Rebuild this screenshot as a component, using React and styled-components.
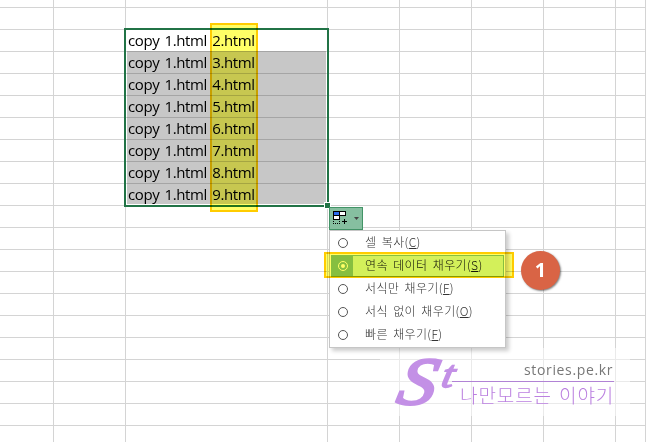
import React from "react";
import styled, { createGlobalStyle } from "styled-components";

const GlobalStyle = createGlobalStyle`
  *, *::before, *::after { box-sizing: border-box; }
  body {
    margin: 0;
    background: #fff;
    overflow: hidden;
    font-family: "Open Sans", "Noto Sans CJK KR", sans-serif;
  }
`;

const Screen = styled.main`
  position: relative;
  width: 646px;
  height: 442px;
  overflow: hidden;
`;

const Sheet = styled.div`
  display: grid;
  grid-template-columns: 54px 72px 202px repeat(4, 72px) 30px;
  grid-template-rows: 8px repeat(20, 22px);
`;

const Cell = styled.div`
  border-right: 1px solid #d4d4d4;
  border-bottom: 1px solid #d4d4d4;
  padding-left: 2px;
  font-size: 15px;
  line-height: 21px;
  letter-spacing: -0.4px;
  word-spacing: 1.8px;
  white-space: pre;
  color: #000;
`;

const Selection = styled.div`
  position: absolute;
  left: 124px;
  top: 28px;
  width: 205px;
  height: 179px;
  border: 2px solid #217346;
  padding: 21px 1px 1px;
`;

const SelectionShade = styled.div`
  height: 153px;
  background: rgba(0, 0, 0, 0.22);
`;

const FillHandle = styled.div`
  position: absolute;
  right: -4px;
  bottom: -4px;
  width: 7px;
  height: 7px;
  border: 1px solid #fff;
  background: #217346;
`;

const Marker = styled.div`
  position: absolute;
  left: ${(p) => p.$x}px;
  top: ${(p) => p.$y}px;
  width: ${(p) => p.$w}px;
  height: ${(p) => p.$h}px;
  background: #ffff66;
  border: 2px solid #ffcc00;
  mix-blend-mode: multiply;
`;

const AutoFill = styled.div`
  position: absolute;
  left: 329px;
  top: 207px;
  display: flex;
  flex-direction: column;
  align-items: flex-start;
`;

const OptionsButton = styled.button`
  width: 34px;
  height: 23px;
  padding: 0;
  display: flex;
  border: 1px solid #439467;
  background: #86bfa0;
`;

const Menu = styled.ul`
  display: flex;
  flex-direction: column;
  gap: 1px;
  width: 177px;
  height: 118px;
  margin: 0;
  padding: 1px;
  list-style: none;
  background: #fff;
  border: 1px solid #c6c6c6;
  box-shadow: 3px 3px 4px rgba(0, 0, 0, 0.2);
`;

const MenuItem = styled.li`
  display: flex;
  align-items: center;
  flex: none;
  height: 22px;
  border: 1px solid ${(p) => (p.$active ? "#86bfa0" : "transparent")};
  background: ${(p) => (p.$active ? "#d3f0e0" : "transparent")};
  color: ${(p) => (p.$active ? "#111" : "#333")};
  font: 300 12px/18px "Noto Sans CJK KR", sans-serif;
`;

const RadioCell = styled.span`
  display: flex;
  align-items: center;
  justify-content: center;
  width: 21px;
  height: 20px;
  background: ${(p) => (p.$active ? "#86bfa0" : "transparent")};
`;

const Radio = styled.span`
  display: flex;
  align-items: center;
  justify-content: center;
  width: 10px;
  height: 10px;
  margin-left: 1px;
  border: 1.4px solid ${(p) => (p.$active ? "#fff" : "#555")};
  border-radius: 50%;

  &::after {
    content: "";
    width: 4px;
    height: 4px;
    border-radius: 50%;
    background: ${(p) => (p.$active ? "#fff" : "transparent")};
  }
`;

const ItemLabel = styled.span`
  margin: -2px 0 0 12px;
  letter-spacing: 0.35px;
  word-spacing: 2.4px;
  white-space: nowrap;
`;

const Badge = styled.div`
  position: absolute;
  left: 521px;
  top: 251px;
  width: 39px;
  height: 39px;
  display: flex;
  align-items: center;
  justify-content: center;
  border-radius: 50%;
  background: #d96445;
  box-shadow: 1px 1px 2px rgba(0, 0, 0, 0.5);
  color: #fff;
  font: bold 20px/36px "Open Sans", sans-serif;
  padding-bottom: 2px;
`;

const Watermark = styled.div`
  position: absolute;
  left: 380px;
  top: 348px;
  width: 250px;
  height: 68px;
  display: flex;
  background: rgba(255, 255, 255, 0.5);
`;

const Monogram = styled.svg`
  flex: none;
  width: 72px;
  height: 68px;
  overflow: visible;
  fill: #c390e6;
  stroke: #c390e6;
  font-family: "Liberation Serif", serif;
  font-style: italic;
`;

const Caption = styled.div`
  flex: none;
  width: 162px;
`;

const Site = styled.div`
  height: 34px;
  padding: 13px 0 0 72px;
  border-bottom: 1px solid #b183d5;
  color: #777;
  font: 14px/18px "Open Sans", sans-serif;
  letter-spacing: 0.65px;
  white-space: nowrap;
`;

const Slogan = styled.div`
  padding-left: 8px;
  color: #bb80e0;
  font: 300 19px/25px "Noto Sans CJK KR", sans-serif;
  letter-spacing: 0.9px;
  word-spacing: 2px;
  white-space: nowrap;
`;

const FIRST_ROW = 2;
const ROWS = Array.from({ length: 21 }, (_, row) => row);
const COLUMNS = Array.from({ length: 8 }, (_, column) => column);

const cellText = (row, column) =>
  column === 2 && row >= FIRST_ROW && row < FIRST_ROW + 8 ? `copy 1.html ${row}.html` : "";

const OPTIONS = [
  { label: "셀 복사", access: "C" },
  { label: "연속 데이터 채우기", access: "S", active: true },
  { label: "서식만 채우기", access: "F" },
  { label: "서식 없이 채우기", access: "O" },
  { label: "빠른 채우기", access: "F" },
];

function FillIcon() {
  return (
    <svg width="32" height="21" viewBox="330 208 32 21" shapeRendering="crispEdges">
      <rect x="333" y="211" width="13" height="5" fill="#000" />
      <rect x="334" y="212" width="5" height="3" fill="#2b6cf0" />
      <rect x="340" y="212" width="5" height="3" fill="#fff" />
      <rect x="333" y="215" width="7" height="5" fill="#000" />
      <rect x="334" y="216" width="5" height="3" fill="#fff" />
      <path d="M333 223.5h8M333.5 221v2M339.5 221v2" stroke="#000" strokeDasharray="1 1" />
      <path d="M342 221.5h5M344.5 219v5" stroke="#000" />
      <path d="M354 217h5l-2.5 3z" fill="#444" shapeRendering="auto" />
    </svg>
  );
}

export default function App() {
  return (
    <Screen>
      <GlobalStyle />
      <Sheet>
        {ROWS.map((row) =>
          COLUMNS.map((column) => <Cell key={`${row}-${column}`}>{cellText(row, column)}</Cell>)
        )}
      </Sheet>
      <Selection>
        <SelectionShade />
        <FillHandle />
      </Selection>
      <Watermark>
        <Monogram viewBox="0 0 72 68">
          <text transform="translate(15 56) skewX(-12) scale(1.13 1)" fontSize="67" strokeWidth="2.6">S</text>
          <text transform="translate(60 39) skewX(-12) scale(1.15 1)" fontSize="38" strokeWidth="1.6">t</text>
        </Monogram>
        <Caption>
          <Site>stories.pe.kr</Site>
          <Slogan>나만모르는 이야기</Slogan>
        </Caption>
      </Watermark>
      <AutoFill>
        <OptionsButton aria-label="자동 채우기 옵션">
          <FillIcon />
        </OptionsButton>
        <Menu>
          {OPTIONS.map(({ label, access, active }) => (
            <MenuItem key={label} $active={active}>
              <RadioCell $active={active}>
                <Radio $active={active} />
              </RadioCell>
              <ItemLabel>
                {label}(<u>{access}</u>)
              </ItemLabel>
            </MenuItem>
          ))}
        </Menu>
      </AutoFill>
      <Marker $x={210} $y={23} $w={48} $h={189} />
      <Marker $x={324} $y={252} $w={190} $h={26} />
      <Badge>1</Badge>
    </Screen>
  );
}
